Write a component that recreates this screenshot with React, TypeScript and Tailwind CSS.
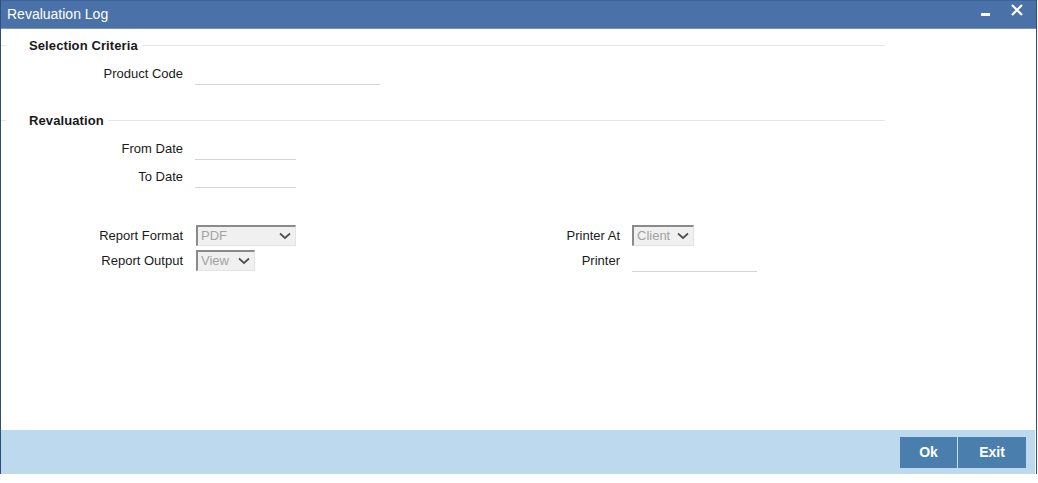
import React from "react";

const font = { fontFamily: '"Liberation Sans", Arial, sans-serif' };

function Chevron() {
  return (
    <svg width="12" height="8" viewBox="0 0 12 8" className="shrink-0">
      <path d="M1 1.5 L6 6 L11 1.5" fill="none" stroke="#505050" strokeWidth="1.7" />
    </svg>
  );
}

function FakeSelect({ value, w }: { value: string; w: string }) {
  return (
    <div
      className={`${w} h-[21px] flex items-center justify-between pl-[3px] pr-[4px] bg-[#f0f0f0] border-l-2 border-t-2 border-[#8a8a8a] border-r border-b border-r-[#e3e3e3] border-b-[#e3e3e3] text-[13px] text-[#a3a3a3]`}
    >
      <span>{value}</span>
      <Chevron />
    </div>
  );
}

function Legend({ text }: { text: string }) {
  return (
    <div className="flex items-center h-[16px] w-[884px]">
      <div className="w-[5px] h-px bg-[#e6e6e6]" />
      <span className="pl-[23px] pr-[4px] text-[13px] font-bold text-[#1a1a1a] leading-none tracking-[0.1px]">{text}</span>
      <div className="flex-1 h-px bg-[#e6e6e6]" />
    </div>
  );
}

function Field({ label, w, labelW = "w-[182px]" }: { label: string; w: string; labelW?: string }) {
  return (
    <div className="flex items-center h-[23px]">
      <div className={`${labelW} text-right text-[13px] text-[#1a1a1a]`}>{label}</div>
      <div className={`ml-[12px] ${w} h-[23px] border-b border-[#d4d4d4]`} />
    </div>
  );
}

export default function App() {
  return (
    <div className="w-[1038px] h-[483px] bg-white" style={font}>
      <div className="w-[1037px] h-[474px] flex flex-col border-l border-r border-[#2c4f82]">
        {/* Title bar */}
        <div className="h-[29px] shrink-0 bg-[#4a72a9] border-t border-[#3c629a] border-b border-b-[#7d94ad] flex items-center justify-between pl-[6px]">
          <span className="text-[14px] text-white leading-none mt-[-2px]">Revaluation Log</span>
          <div className="flex items-center h-full">
            <div className="w-[9px] h-[3px] bg-white mr-[21px]" />
            <svg width="12" height="12" viewBox="0 0 12 12" className="mr-[13px] mb-[9px]">
              <path d="M1 1 L11 11 M11 1 L1 11" stroke="white" strokeWidth="2.2" />
            </svg>
          </div>
        </div>

        {/* Body */}
        <div className="flex-1 bg-white flex flex-col pt-[8px]">
          <Legend text="Selection Criteria" />
          <div className="mt-[9px]">
            <Field label="Product Code" w="w-[185px]" />
          </div>
          <div className="mt-[27px]">
            <Legend text="Revaluation" />
          </div>
          <div className="mt-[9px]">
            <Field label="From Date" w="w-[101px]" />
          </div>
          <div className="mt-[5px]">
            <Field label="To Date" w="w-[101px]" />
          </div>

          <div className="mt-[36px] flex">
            <div className="w-[400px] flex flex-col">
              <div className="flex items-center h-[22px]">
                <div className="w-[182px] text-right text-[13px] text-[#1a1a1a] pt-[1px]">Report Format</div>
                <div className="ml-[13px]">
                  <FakeSelect value="PDF" w="w-[100px]" />
                </div>
              </div>
              <div className="flex items-center h-[22px] mt-[3px]">
                <div className="w-[182px] text-right text-[13px] text-[#1a1a1a] pt-[1px]">Report Output</div>
                <div className="ml-[13px]">
                  <FakeSelect value="View" w="w-[59px]" />
                </div>
              </div>
            </div>
            <div className="flex flex-col">
              <div className="flex items-center h-[22px]">
                <div className="w-[219px] text-right text-[13px] text-[#1a1a1a] pt-[1px]">Printer At</div>
                <div className="ml-[12px]">
                  <FakeSelect value="Client" w="w-[62px]" />
                </div>
              </div>
              <div className="mt-[3px]">
                <Field label="Printer" w="w-[125px]" labelW="w-[219px]" />
              </div>
            </div>
          </div>
        </div>

        {/* Footer */}
        <div className="h-[44px] shrink-0 bg-[#bdd9ed] mr-[1px] flex items-center justify-end pr-[9px]">
          <button className="w-[57px] h-[31px] bg-[#4a7fad] text-white font-bold text-[14px]">Ok</button>
          <div className="w-px h-[31px] bg-[#c8dcec]" />
          <button className="w-[68px] h-[31px] bg-[#4a7fad] text-white font-bold text-[14px]">Exit</button>
        </div>
      </div>
    </div>
  );
}
